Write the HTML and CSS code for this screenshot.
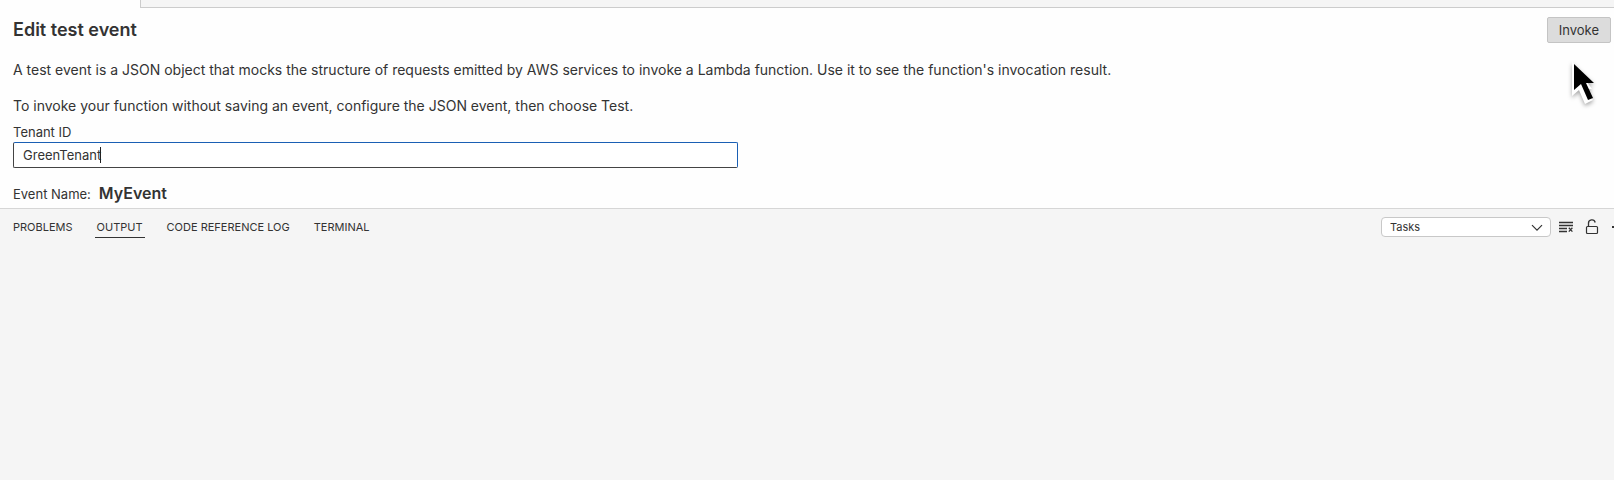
FILE: index.html
```html
<!DOCTYPE html>
<html lang="en">
<head>
    <meta charset="UTF-8">
    <meta name="viewport" content="width=device-width, initial-scale=1.0">
    <title>Edit test event</title>
    <link rel="stylesheet" href="styles.css">
</head>
<body>
    <div class="tab-strip">
        <div class="active-tab"></div>
        <div class="tab-rest"></div>
    </div>

    <main class="editor">
        <header class="editor-head">
            <h1>Edit test event</h1>
            <button type="button" class="invoke">Invoke</button>
        </header>
        <p>A test event is a JSON object that mocks the structure of requests emitted by AWS services to invoke a Lambda function. Use it to see the function's invocation result.</p>
        <p>To invoke your function without saving an event, configure the JSON event, then choose Test.</p>

        <label class="tenant-label" for="tenant">Tenant ID</label>
        <div class="tenant-field">
            <input type="text" id="tenant" value="GreenTenant">
            <span class="caret"></span>
        </div>

        <div class="event-name">
            <span>Event Name:</span>
            <strong>MyEvent</strong>
        </div>
    </main>

    <section class="panel">
        <nav class="panel-tabs">
            <a href="#problems">PROBLEMS</a>
            <a href="#output" class="active">OUTPUT</a>
            <a href="#references">CODE REFERENCE LOG</a>
            <a href="#terminal">TERMINAL</a>
        </nav>
        <div class="panel-actions">
            <div class="channel">
                <select aria-label="Output channel">
                    <option>Tasks</option>
                </select>
                <svg class="chevron" width="12" height="8" viewBox="0 0 12 8"><path d="M1 1.2l5 5 5-5"/></svg>
            </div>
            <button type="button" class="icon-button" aria-label="Clear output">
                <svg width="16" height="16" viewBox="0 0 16 16"><path d="M1 3.500h14M1 6.500h14M1 9.500h8M1 12.500h8M10.800 8.800l3.600 3.800M14.400 8.800l-3.600 3.800"/></svg>
            </button>
            <button type="button" class="icon-button" aria-label="Lock scrolling">
                <svg width="16" height="16" viewBox="0 0 16 16"><rect x="2.500" y="7.500" width="11" height="7" rx="1"/><path d="M4.500 7.500V4.500a3.400 3.400 0 0 1 6.700-1"/></svg>
            </button>
            <button type="button" class="icon-button" aria-label="More actions">
                <svg width="16" height="16" viewBox="0 0 16 16"><path class="dots" d="M2 7h2v2H2zM7 7h2v2H7zM12 7h2v2h-2z"/></svg>
            </button>
        </div>
    </section>

    <svg class="pointer" width="32" height="50" viewBox="0 0 32 50">
        <path d="M4 1v35l7-6 6 14 8-4-6-11h5z" fill="#fff"/>
        <path d="M6 4v26l7-6 7 16 5-2-7-15h8z" fill="#000"/>
    </svg>
</body>
</html>
```

FILE: styles.css
```css
* {
    box-sizing: border-box;
}

body {
    margin: 0;
    min-height: 100vh;
    display: flex;
    flex-direction: column;
    overflow: hidden;
    background-color: #fefefe;
    color: #333;
    font-family: Inter, "Liberation Sans", sans-serif;
    font-size: 13px;
    line-height: 16px;
}

button, input, select {
    font: inherit;
    color: inherit;
}

.tab-strip {
    display: flex;
    height: 8px;
}

.active-tab {
    width: 140px;
}

.tab-rest {
    flex: 1;
    background-color: #f5f5f5;
    border-left: 1px solid #ccc;
    border-bottom: 1px solid #ccc;
}

.editor {
    padding: 9px 3px 4px 13px;
}

.editor-head {
    display: flex;
    justify-content: space-between;
    align-items: center;
    margin-bottom: 17px;
}

h1 {
    margin: 0;
    font-size: 18px;
    font-weight: 600;
    line-height: 24px;
}

.invoke {
    padding: 4px 11px;
    height: 26px;
    background-color: #dcdcdc;
    border: 1px solid #c4c4c4;
    border-radius: 2px;
}

p {
    margin: 0 0 16px;
    font-size: 14px;
    line-height: 20px;
}

p + p {
    margin-bottom: 8px;
}

.tenant-label {
    display: block;
    margin-bottom: 2px;
}

.tenant-field {
    position: relative;
    width: 45.4%;
}

.tenant-field input {
    display: block;
    width: 100%;
    height: 26px;
    padding: 0 9px;
    background-color: #fff;
    border: 1px solid #1a5fb4;
    border-bottom-color: #444;
    border-left-color: #444;
    border-radius: 2px;
    outline: none;
}

.caret {
    position: absolute;
    left: 87px;
    top: 5px;
    width: 1px;
    height: 16px;
    background-color: #222;
}

.event-name {
    display: flex;
    align-items: baseline;
    gap: 8px;
    margin-top: 15px;
    margin-bottom: 1px;
}

.event-name strong {
    font-size: 16px;
    font-weight: 600;
    line-height: 20px;
}

.panel {
    flex: 1;
    display: flex;
    justify-content: space-between;
    align-items: flex-start;
    background-color: #f5f5f5;
    border-top: 1px solid #d6d6d6;
    font-size: 11px;
}

.panel-tabs {
    display: flex;
    gap: 20px;
    padding: 9px 11px;
}

.panel-tabs a {
    padding: 1px 2px 2px;
    color: #333;
    text-decoration: none;
    border-bottom: 1px solid transparent;
}

.panel-tabs .active {
    border-bottom-color: #333;
}

.panel-actions {
    display: flex;
    align-items: center;
    gap: 10px;
    margin-right: -12px;
    padding-top: 8px;
}

.channel {
    position: relative;
    margin-right: -3px;
}

.channel select {
    display: block;
    width: 170px;
    height: 20px;
    padding: 0 8px;
    appearance: none;
    background-color: #fff;
    border: 1px solid #c8c8c8;
    border-radius: 4px;
}

.chevron {
    position: absolute;
    right: 8px;
    top: 7px;
    pointer-events: none;
}

.icon-button {
    display: block;
    padding: 0;
    height: 16px;
    border: 0;
    background: none;
}

.panel svg {
    fill: none;
    stroke: #333;
    stroke-width: 1.3;
}

.panel .chevron, .panel rect {
    stroke-width: 1.2;
}

.panel .dots {
    fill: #333;
    stroke: none;
}

.pointer {
    position: absolute;
    right: 14px;
    top: 60px;
    pointer-events: none;
    filter: drop-shadow(0 2px 2px rgba(0, 0, 0, 0.35));
}
```
